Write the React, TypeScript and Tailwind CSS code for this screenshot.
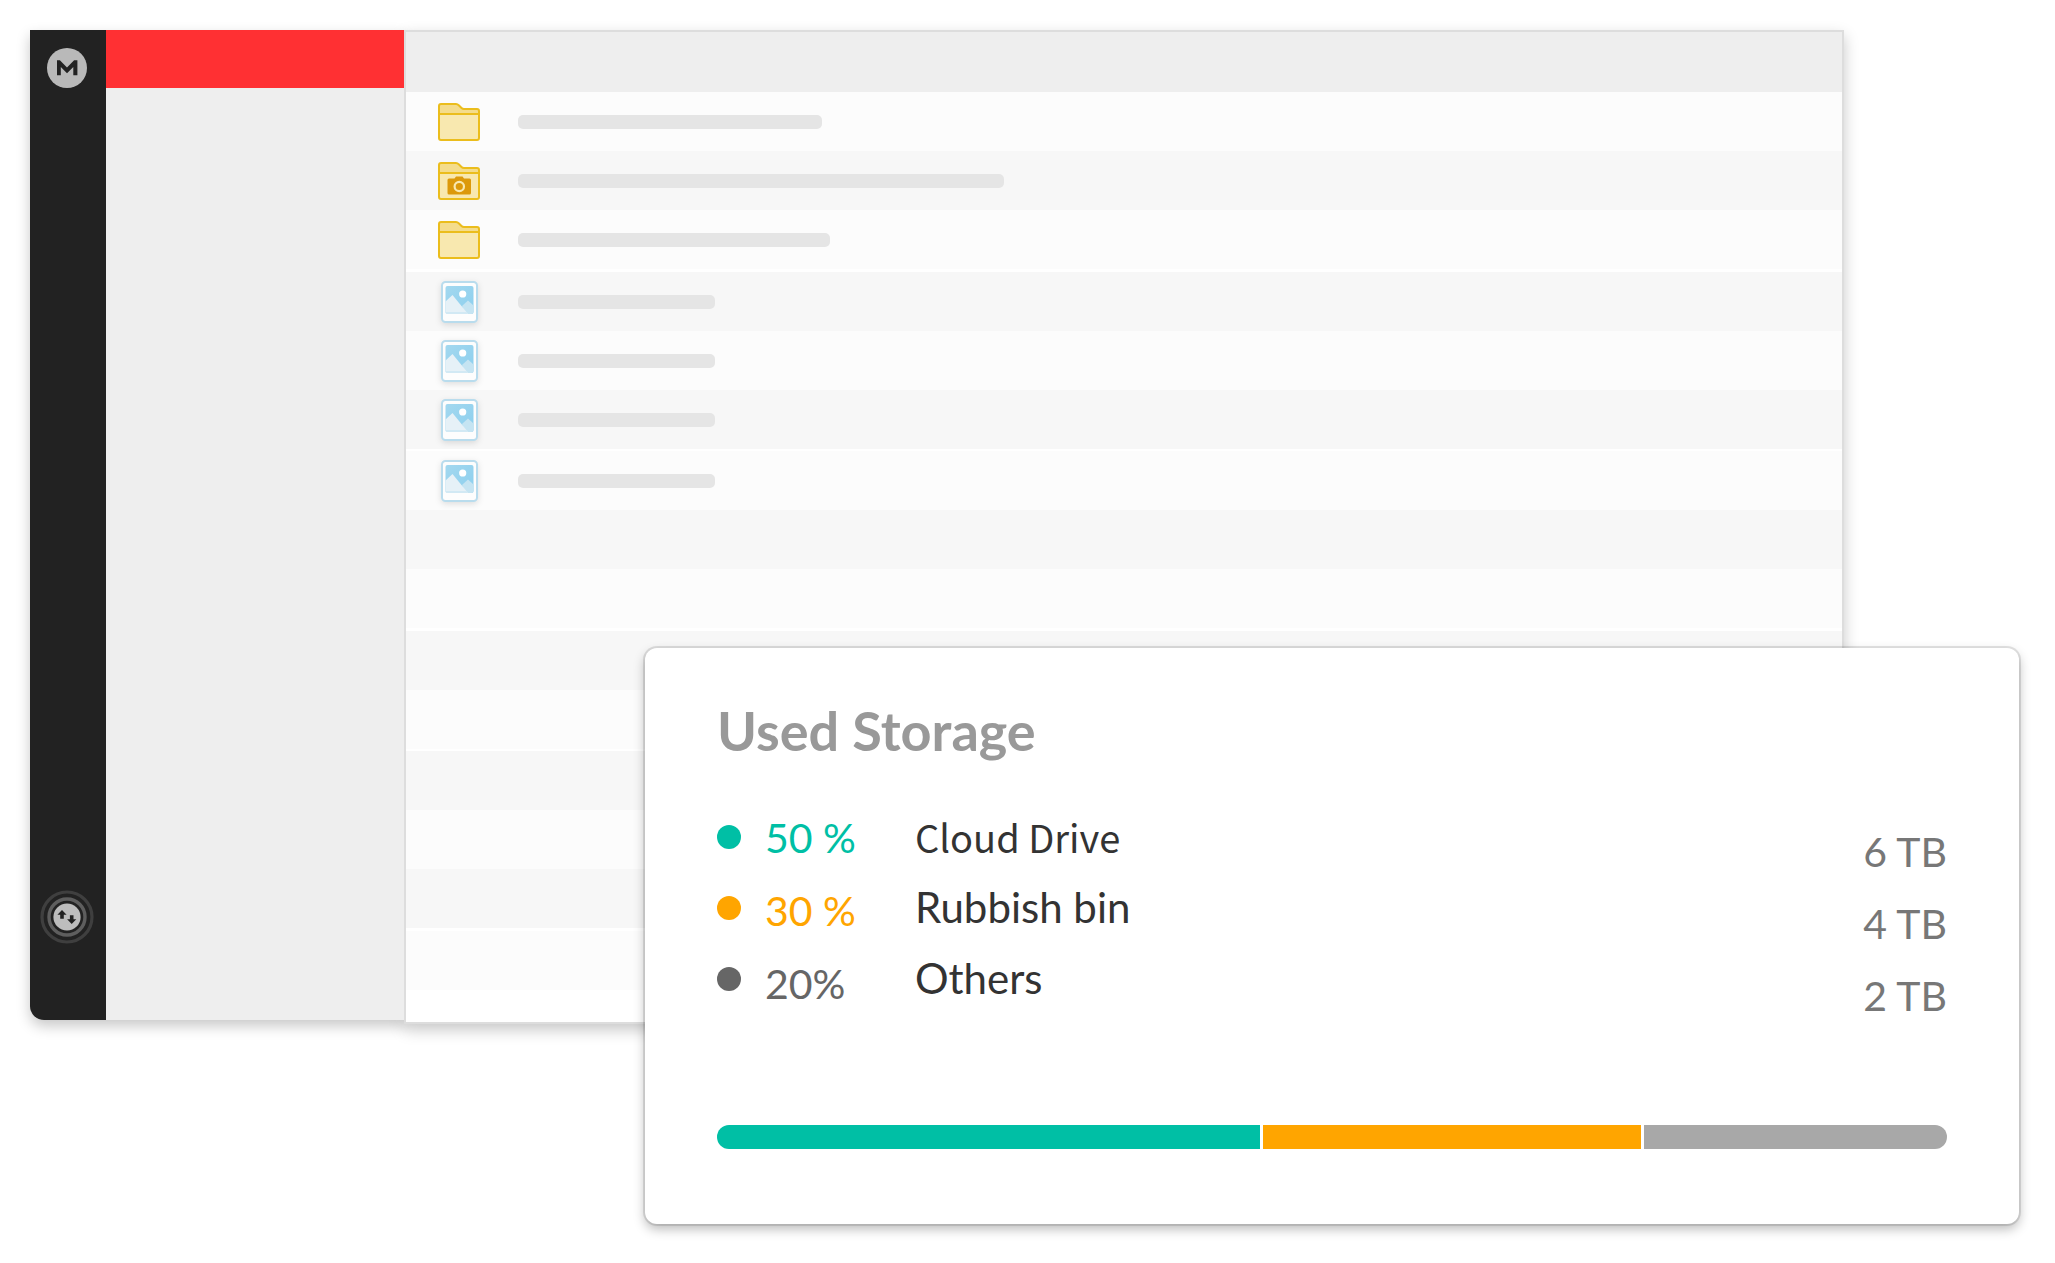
const ROWS = [
  { icon: 'folder', bar: 'w-[304px]', gap: '' },
  { icon: 'camera', bar: 'w-[486px]', gap: '' },
  { icon: 'folder', bar: 'w-[312px]', gap: 'mb-[3px]' },
  { icon: 'image', bar: 'w-[197px]', gap: '' },
  { icon: 'image', bar: 'w-[197px]', gap: '' },
  { icon: 'image', bar: 'w-[197px]', gap: 'mb-[2px]' },
  { icon: 'image', bar: 'w-[197px]', gap: '' },
  { icon: '', bar: '', gap: '' },
  { icon: '', bar: '', gap: 'mb-[3px]' },
  { icon: '', bar: '', gap: '' },
  { icon: '', bar: '', gap: 'mb-[2px]' },
  { icon: '', bar: '', gap: '' },
  { icon: '', bar: '', gap: '' },
  { icon: '', bar: '', gap: 'mb-[3px]' },
  { icon: '', bar: '', gap: '' },
];

const USAGE = [
  { name: 'Cloud Drive', percent: '50 %', size: '6 TB', dot: 'bg-[#00bfa5]', text: 'text-[#00bfa5]', bar: 'bg-[#00bfa5]', share: 543, font: 'font-["Noto_Sans_CJK_JP",sans-serif] text-[38px]' },
  { name: 'Rubbish bin', percent: '30 %', size: '4 TB', dot: 'bg-[#ffa500]', text: 'text-[#ffa500]', bar: 'bg-[#ffa500]', share: 378, font: 'text-[42px]' },
  { name: 'Others', percent: '20%', size: '2 TB', dot: 'bg-[#666666]', text: 'text-[#666666]', bar: 'bg-[#a8a8a8]', share: 303, font: 'text-[42px]' },
];

function Logo() {
  return (
    <svg className="size-10" viewBox="0 0 40 40" aria-label="Home">
      <circle cx="20" cy="20" r="20" fill="#b9b9b9" />
      <path d="M10 27.3V12.3h2.9L20 19.6l7.1-7.3H30.400v15H26.300V19L20 25.200 13.800 19v8.300z" fill="#222" />
    </svg>
  );
}

function Transfers() {
  return (
    <svg className="size-[54px]" viewBox="0 0 54 54" aria-label="Transfers">
      <circle cx="27" cy="27" r="25" fill="none" stroke="#3f3f3f" strokeWidth="3.200" />
      <circle cx="27" cy="27" r="18" fill="none" stroke="#5e5e5e" strokeWidth="3.400" />
      <circle cx="27" cy="27" r="13.600" fill="#bdbdbd" />
      <path d="M22 20l4.600 4.800h-2.800v4h-3.600v-4h-2.800zM31.700 34l-4.600-4.800h2.800v-4h3.600v4h2.800z" fill="#222" />
    </svg>
  );
}

function Folder({ camera }: { camera?: boolean }) {
  return (
    <svg className="h-[38px] w-[42px]" viewBox="0 0 42 38">
      <path d="M1 3Q1 1 3 1H18Q19.500 1 21 2.500L23.500 5Q24.500 6 26 6H39Q41 6 41 8V35Q41 37 39 37H3Q1 37 1 35z" fill="#f4dc8b" />
      <path d="M1 11H41V35Q41 37 39 37H3Q1 37 1 35z" fill="#f8e8af" />
      <path d="M1 3Q1 1 3 1H18Q19.500 1 21 2.500L23.500 5Q24.500 6 26 6H39Q41 6 41 8V35Q41 37 39 37H3Q1 37 1 35zM1 11H41" fill="none" stroke="#ebbd1c" strokeWidth="2" />
      {camera && (
        <>
          <path d="M9.500 18Q9.500 16.500 11 16.500H16.500L18 14.500H24.500L26 16.500H31.500Q33 16.500 33 18V31Q33 32.500 31.500 32.500H11Q9.500 32.500 9.500 31z" fill="#dc990b" />
          <circle cx="21.300" cy="24.500" r="4.700" fill="none" stroke="#f8e8af" strokeWidth="2.200" />
        </>
      )}
    </svg>
  );
}

function Picture() {
  return (
    <svg className="h-[42px] w-[37px] drop-shadow-[0_2px_3px_rgba(0,0,0,0.12)]" viewBox="0 0 37 42">
      <defs>
        <linearGradient id="sky" x1="0" y1="0" x2="1" y2="1">
          <stop offset="0" stopColor="#a3d8ef" />
          <stop offset="1" stopColor="#8ccfee" />
        </linearGradient>
      </defs>
      <rect x="1" y="1" width="35" height="40" rx="3.500" fill="#fdfdfd" stroke="#b9dced" strokeWidth="2" />
      <rect x="4.500" y="5" width="28" height="28" rx="2" fill="url(#sky)" />
      <path d="M21 25l6-5.500 5.500 5V31q0 2-2 2H24z" fill="#c5e4f2" />
      <path d="M4.500 20.500l7-6.500L27 33H6.500q-2 0-2-2z" fill="#e6f1f7" />
      <path d="M4.500 31H25.500L27 33H6.500q-2 0-2-2z" fill="#d2e9f4" />
      <circle cx="21.700" cy="13" r="3.600" fill="#fff" />
    </svg>
  );
}

export default function App() {
  return (
    <div className="relative bg-white p-[30px] pr-[211px] pb-[239px] font-[Lato,sans-serif]">
      <main className="flex items-start">
        <div className="flex h-[990px] flex-none rounded-bl-[14px] shadow-[0_6px_14px_rgba(0,0,0,0.22)]">
          <nav className="z-20 flex w-[76px] flex-col items-center justify-between rounded-bl-[14px] bg-[#222222] pt-[18px] pr-[3px] pb-[76px]">
            <a href="#home"><Logo /></a>
            <a href="#transfers"><Transfers /></a>
          </nav>
          <aside className="z-20 w-[298px] bg-[#eeeeee]">
            <div className="h-[58px] bg-[#ff3033]" />
          </aside>
        </div>
        <section className="z-10 min-w-0 flex-1 border-2 border-[#dddddd] bg-white pb-8 shadow-[0_6px_14px_rgba(0,0,0,0.22)]">
          <header className="h-[60px] bg-[#eeeeee]" />
          <ul>
            {ROWS.map((row, i) => (
              <li key={i} className={`flex h-[59px] items-center odd:bg-[#fcfcfc] even:bg-[#f7f7f7] ${row.gap}`}>
                <span className="flex w-28 flex-none justify-center pr-[6px]">
                  {row.icon === 'folder' && <Folder />}
                  {row.icon === 'camera' && <Folder camera />}
                  {row.icon === 'image' && <Picture />}
                </span>
                <span className={`h-[14px] rounded-[5px] bg-[#e5e5e5] ${row.bar}`} />
              </li>
            ))}
          </ul>
        </section>
      </main>

      <section className="absolute top-[648px] right-9 left-[645px] z-30 rounded-xl bg-white px-18 pt-[50px] pb-[75px] shadow-[0_0_0_2px_rgba(0,0,0,0.10),0_5px_12px_rgba(0,0,0,0.28)]">
        <h1 className="text-[54px] leading-[66px] font-bold text-[#999999]">Used Storage</h1>
        <div className="mt-[37px] flex h-[324px] items-start">
          <ul className="w-12">
            {USAGE.map((u) => (
              <li key={u.name} className="flex h-[71px] items-center"><span className={`size-6 rounded-full ${u.dot}`} /></li>
            ))}
          </ul>
          <ul className="w-[150px] text-[41px] leading-[73px]">
            {USAGE.map((u) => <li key={u.name} className={u.text}>{u.percent}</li>)}
          </ul>
          <ul className="flex-1 leading-[71px] text-[#333333]">
            {USAGE.map((u) => <li key={u.name} className={`h-[71px] ${u.font}`}>{u.name}</li>)}
          </ul>
          <ul className="mt-[15px] text-right text-[41px] leading-[72px] text-[#777777]">
            {USAGE.map((u) => <li key={u.name}>{u.size}</li>)}
          </ul>
        </div>
        <div className="flex h-6 gap-[3px] overflow-hidden rounded-full">
          {USAGE.map((u) => <div key={u.name} className={u.bar} style={{ flexGrow: u.share, flexBasis: 0 }} />)}
        </div>
      </section>
    </div>
  );
}
